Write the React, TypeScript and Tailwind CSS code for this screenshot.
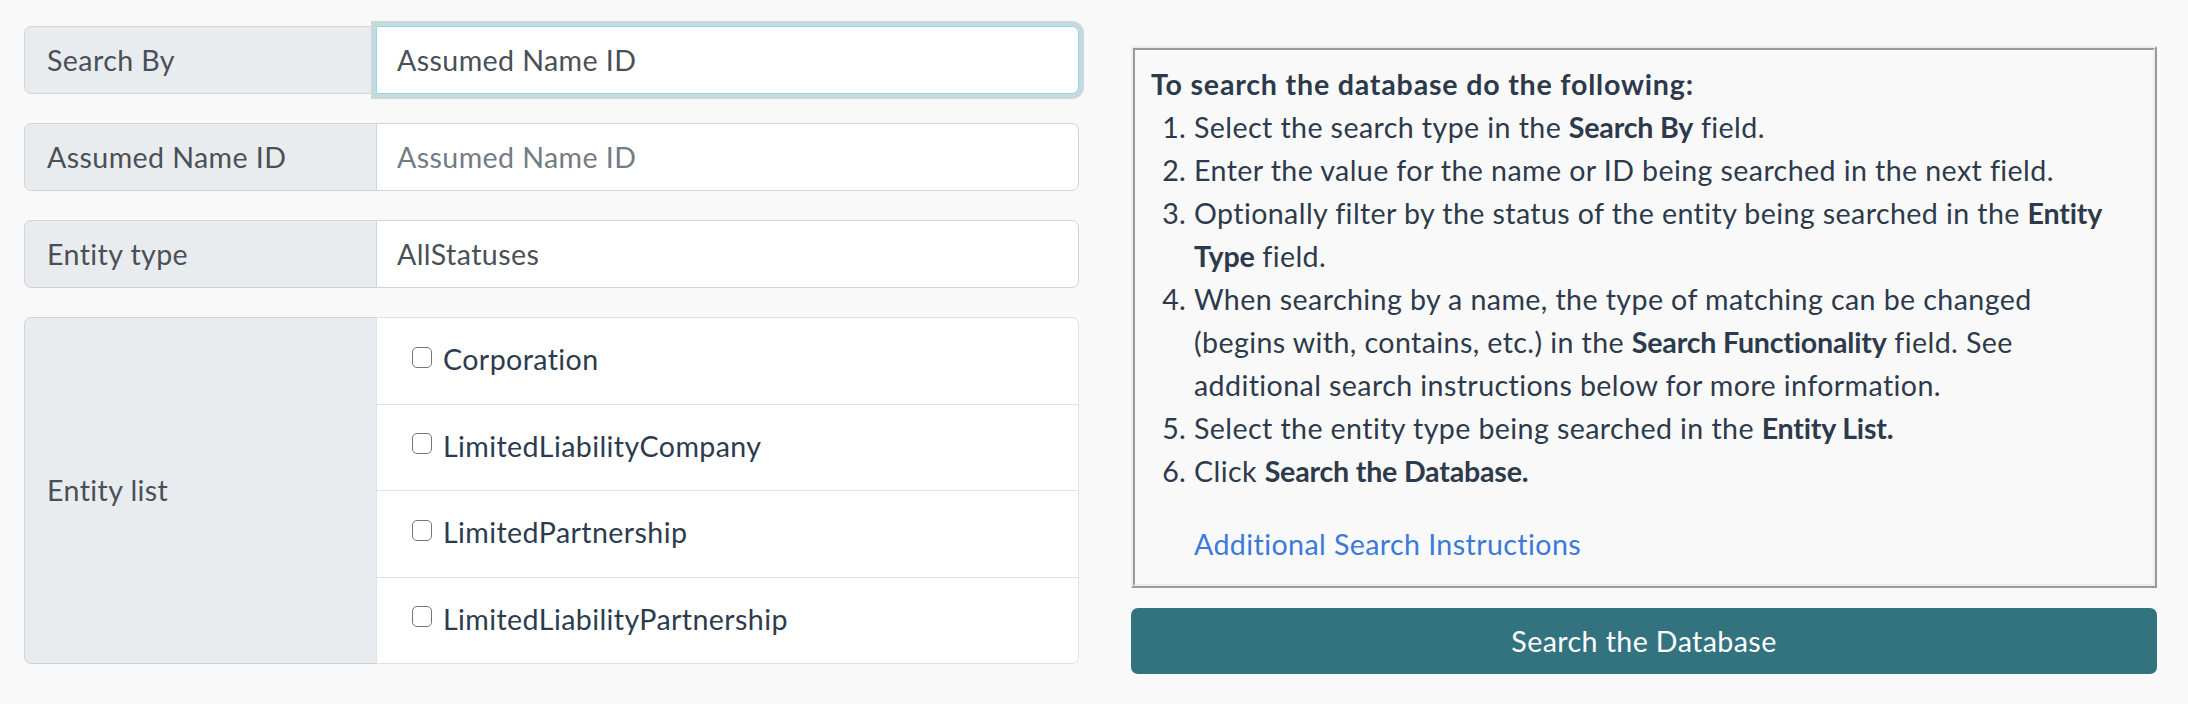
import React, { useState } from "react";

const ENTITY_TYPES = [
  "Corporation",
  "LimitedLiabilityCompany",
  "LimitedPartnership",
  "LimitedLiabilityPartnership",
];

interface FieldRowProps {
  label: string;
  children: React.ReactNode;
}

const FieldRow: React.FC<FieldRowProps> = ({ label, children }) => (
  <div className="flex h-[68px]">
    <div className="flex w-[353px] shrink-0 items-center rounded-l-[7px] border border-[#ced4da] bg-[#e9ecef] px-[22px] text-[#495057]">
      {label}
    </div>
    {children}
  </div>
);

const Strong: React.FC<{ children: React.ReactNode }> = ({ children }) => (
  <b className="tracking-[-0.2px]">{children}</b>
);

const App: React.FC = () => {
  const [searchBy, setSearchBy] = useState("Assumed Name ID");
  const [nameId, setNameId] = useState("");
  const [status, setStatus] = useState("AllStatuses");
  const [checked, setChecked] = useState<string[]>([]);

  const toggle = (type: string) => {
    setChecked((prev) =>
      prev.includes(type) ? prev.filter((t) => t !== type) : [...prev, type]
    );
  };

  return (
    <div className="flex h-[704px] w-[2188px] gap-[52px] bg-[#f9f9f9] pl-[24px] pt-[26px] font-[Lato,sans-serif] text-[28.6px] leading-[43px] tracking-[0.4px]">
      {/* search form */}
      <div className="flex w-[1055px] flex-col gap-[29px]">
        <FieldRow label="Search By">
          <input
            className="relative z-10 -ml-px min-w-0 flex-1 rounded-r-[7px] border border-[#86def2] bg-white px-[20px] text-[#495057] shadow-[0_0_0_5px_#c9d9db] outline-none"
            value={searchBy}
            onChange={(e) => setSearchBy(e.target.value)}
          />
        </FieldRow>

        <FieldRow label="Assumed Name ID">
          <input
            className="-ml-px min-w-0 flex-1 rounded-r-[7px] border border-[#ced4da] bg-white px-[20px] text-[#495057] outline-none placeholder:text-[#737b84]"
            placeholder="Assumed Name ID"
            value={nameId}
            onChange={(e) => setNameId(e.target.value)}
          />
        </FieldRow>

        <FieldRow label="Entity type">
          <input
            className="-ml-px min-w-0 flex-1 rounded-r-[7px] border border-[#ced4da] bg-white px-[20px] text-[#495057] outline-none"
            value={status}
            onChange={(e) => setStatus(e.target.value)}
          />
        </FieldRow>

        <div className="flex">
          <div className="flex w-[353px] shrink-0 items-center rounded-l-[7px] border border-[#ced4da] bg-[#e9ecef] px-[22px] text-[#495057]">
            Entity list
          </div>
          <ul className="-ml-px flex-1 rounded-r-[7px] border border-[#dee2e6] bg-white">
            {ENTITY_TYPES.map((type, i) => (
              <li
                key={type}
                className={`px-[35px] pb-[22.5px] pt-[20px] ${
                  i > 0 ? "border-t border-[#dee2e6]" : ""
                }`}
              >
                <label className="flex cursor-pointer items-center text-[#2d3b4e]">
                  <input
                    type="checkbox"
                    className="mb-[5px] h-[21px] w-[20px] shrink-0 cursor-pointer appearance-none rounded-[5px] border-[1.5px] border-[#767676] bg-white checked:bg-[#33737f]"
                    checked={checked.includes(type)}
                    onChange={() => toggle(type)}
                  />
                  <span className="ml-[11px]">{type}</span>
                </label>
              </li>
            ))}
          </ul>
        </div>
      </div>

      {/* instructions + submit */}
      <div className="mt-[20px] flex w-[1026px] flex-col gap-[20px]">
        {/* two-tone ridge frame */}
        <div className="border-2 border-b-[#9a9a9a] border-l-[#ececec] border-r-[#9a9a9a] border-t-[#ececec]">
          <div className="border-2 border-b-[#ececec] border-l-[#9a9a9a] border-r-[#ececec] border-t-[#9a9a9a] pb-[18px] pl-[16px] pr-[6px] pt-[13px] text-[#2d3a4b]">
            <div className="font-bold tracking-[0.8px]">To search the database do the following:</div>
            <ol className="mb-[30px] list-decimal pl-[43px]">
              <li>
                Select the search type in the <Strong>Search By</Strong> field.
              </li>
              <li>Enter the value for the name or ID being searched in the next field.</li>
              <li>
                Optionally filter by the status of the entity being searched in the <Strong>Entity</Strong>
                <br />
                <Strong>Type</Strong> field.
              </li>
              <li>
                When searching by a name, the type of matching can be changed
                <br />
                (begins with, contains, etc.) in the <Strong>Search Functionality</Strong> field. See
                <br />
                additional search instructions below for more information.
              </li>
              <li>
                Select the entity type being searched in the <Strong>Entity List.</Strong>
              </li>
              <li>
                Click <Strong>Search the Database.</Strong>
              </li>
            </ol>
            <div className="pl-[43px]">
              <a href="#instructions" className="text-[#3b7ad9]">
                Additional Search Instructions
              </a>
            </div>
          </div>
        </div>
        <button
          type="button"
          className="h-[66px] rounded-[7px] bg-[#33737f] text-white"
        >
          Search the Database
        </button>
      </div>
    </div>
  );
};

export default App;
